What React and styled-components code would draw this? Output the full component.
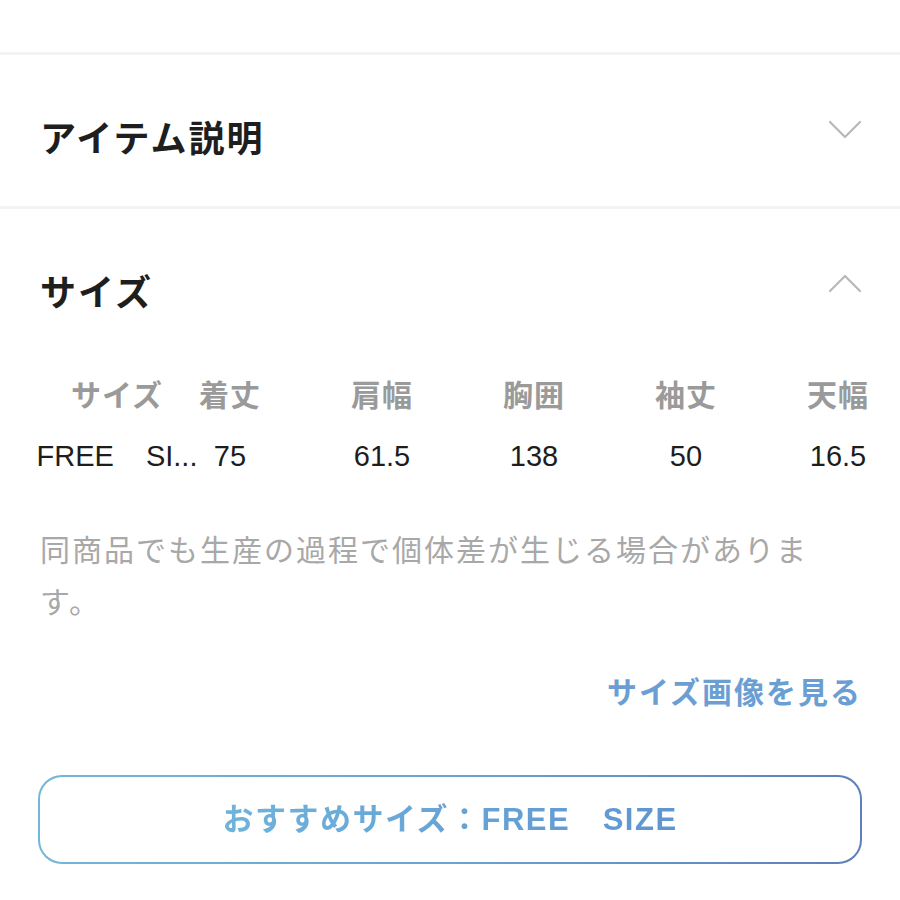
import React from "react";
import styled, { createGlobalStyle } from "styled-components";

const Global = createGlobalStyle`
  html, body { margin: 0; padding: 0; background: #fff; }
  body {
    font-family: "Liberation Sans", "Noto Sans CJK JP", sans-serif;
    color: #1f1f1f;
    overflow-x: hidden;
  }
`;

const Page = styled.div`
  width: 900px;
  background: #fff;
`;

const TopSpace = styled.div`
  height: 52px;
`;

const Divider = styled.div`
  height: 3px;
  background: #f3f3f3;
`;

const SectionHeader = styled.div`
  display: flex;
  align-items: flex-start;
  justify-content: space-between;
  padding: 60px 40px ${(p) => p.$pb}px 40px;
`;

const Title = styled.h2`
  margin: 0;
  font-family: "Noto Sans CJK JP", sans-serif;
  font-size: 36px;
  line-height: 42px;
  font-weight: 700;
  letter-spacing: 2px;
  color: #1e1e1e;
`;

const Chevron = styled.svg`
  width: 34px;
  height: 20px;
  margin-top: ${(p) => p.$mt}px;
  margin-right: -2px;
  flex: none;
`;

const TableWrap = styled.div`
  margin-top: 48px;
  padding-left: 40px;
  overflow: hidden;
`;

const Table = styled.div`
  display: grid;
  grid-template-columns: 154px 112px repeat(4, 152px);
  grid-auto-rows: 63px;
  width: max-content;
`;

const HeadCell = styled.div`
  display: flex;
  align-items: center;
  justify-content: center;
  padding-right: ${(p) => p.$pr || 0}px;
  font-family: "Noto Sans CJK JP", sans-serif;
  font-size: 30px;
  font-weight: 700;
  letter-spacing: 1px;
  color: #9a9a9a;
  white-space: nowrap;
`;

const DataCell = styled.div`
  display: flex;
  align-items: center;
  justify-content: center;
  padding-right: ${(p) => p.$pr || 0}px;
  font-family: "Liberation Sans", sans-serif;
  font-size: 29px;
  line-height: 34px;
  font-weight: 400;
  word-spacing: 24px;
  color: #1d1d1d;
  white-space: pre;
`;

const Note = styled.p`
  margin: 35px 0 0;
  padding: 0 40px;
  font-family: "Noto Sans CJK JP", sans-serif;
  font-size: 30px;
  line-height: 52px;
  letter-spacing: 2px;
  color: #a8a8a8;
  line-break: strict;
`;

const LinkRow = styled.div`
  display: flex;
  justify-content: flex-end;
  padding: 0 40px;
  margin-top: 44px;
`;

const SizeLink = styled.a`
  font-family: "Noto Sans CJK JP", sans-serif;
  font-size: 30px;
  line-height: 40px;
  font-weight: 700;
  letter-spacing: 2px;
  margin-right: -2px;
  color: #6b9fd3;
  text-decoration: none;
`;

const ButtonRow = styled.div`
  padding: 0 38px;
  margin-top: 65px;
  padding-bottom: 36px;
`;

const RecButton = styled.button`
  width: 100%;
  height: 89px;
  border-radius: 24px;
  border: 2px solid transparent;
  background: linear-gradient(#fff, #fff) padding-box,
    linear-gradient(90deg, #71b7d8 0%, #6aa4d2 50%, #5d7fbb 100%) border-box;
  display: flex;
  align-items: center;
  justify-content: center;
  cursor: pointer;
  padding: 0;
`;

const ButtonText = styled.span`
  font-family: "Liberation Sans", "Noto Sans CJK JP", sans-serif;
  font-size: 31px;
  line-height: 40px;
  font-weight: 700;
  letter-spacing: 1.5px;
  background: linear-gradient(90deg, #6fb3da 0%, #5f95d1 100%);
  -webkit-background-clip: text;
  background-clip: text;
  color: transparent;
  white-space: pre;
`;

const headers = ["サイズ", "着丈", "肩幅", "胸囲", "袖丈", "天幅"];
const values = ["FREE SI...", "75", "61.5", "138", "50", "16.5"];

function ChevronIcon({ up, mt }) {
  return (
    <Chevron $mt={mt} viewBox="0 0 34 20" fill="none">
      <polyline
        points={up ? "2,18 17,3 32,18" : "2,2 17,17 32,2"}
        stroke="#b8b8b8"
        strokeWidth="2.2"
        strokeLinecap="round"
        strokeLinejoin="round"
      />
    </Chevron>
  );
}

export default function App() {
  return (
    <Page>
      <Global />
      <TopSpace />
      <Divider />
      <SectionHeader $pb={49}>
        <Title>アイテム説明</Title>
        <ChevronIcon mt={5} />
      </SectionHeader>
      <Divider />
      <SectionHeader $pb={2}>
        <Title>サイズ</Title>
        <ChevronIcon up mt={4} />
      </SectionHeader>
      <TableWrap>
        <Table>
          {headers.map((h, i) => (
            <HeadCell key={h} $pr={i === 1 ? 40 : 0}>
              {h}
            </HeadCell>
          ))}
          {values.map((v, i) => (
            <DataCell key={i} $pr={i === 1 ? 40 : 0}>
              {v}
            </DataCell>
          ))}
        </Table>
      </TableWrap>
      <Note>同商品でも生産の過程で個体差が生じる場合があります。</Note>
      <LinkRow>
        <SizeLink href="#">サイズ画像を見る</SizeLink>
      </LinkRow>
      <ButtonRow>
        <RecButton>
          <ButtonText>おすすめサイズ：FREE　SIZE</ButtonText>
        </RecButton>
      </ButtonRow>
    </Page>
  );
}
